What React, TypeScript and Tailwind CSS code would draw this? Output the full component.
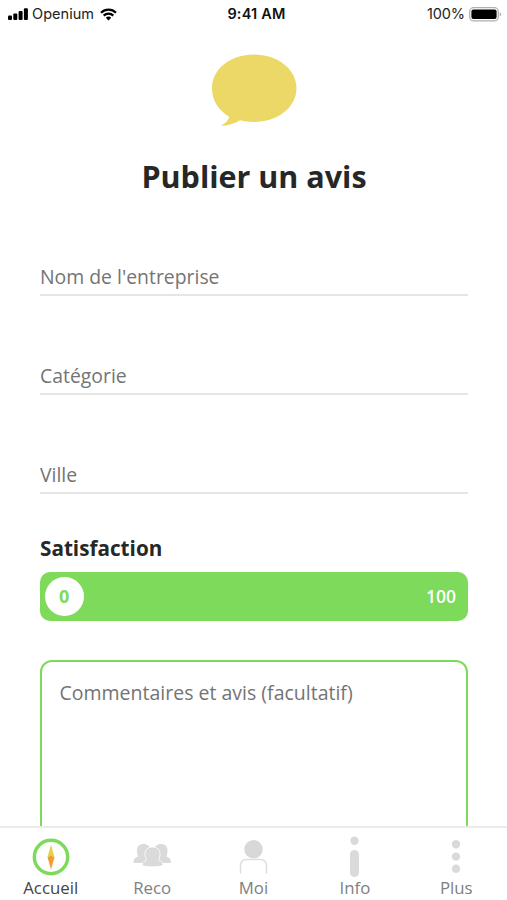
import type { ReactNode } from "react";
import { clsx } from "clsx";

/* ─── Status bar ────────────────────────────────────────────────────── */

function SignalIcon() {
  return (
    <svg width="20" height="12" viewBox="0 0 20 12" fill="#000">
      <rect x="0" y="7.5" width="4" height="4.5" rx="1" />
      <rect x="5.3" y="5.5" width="4" height="6.5" rx="1" />
      <rect x="10.6" y="3" width="4" height="9" rx="1" />
      <rect x="15.9" y="0.3" width="4" height="11.7" rx="1" />
    </svg>
  );
}

function WifiIcon() {
  return (
    <svg width="17" height="13" viewBox="0 0 17 13" fill="none" stroke="#000" strokeWidth="2.2">
      <path d="M1 4.8a10.6 10.6 0 0 1 15 0" />
      <path d="M3.7 7.6a6.8 6.8 0 0 1 9.6 0" />
      <path d="M8.5 12.6 5.8 9.8a3.8 3.8 0 0 1 5.4 0Z" fill="#000" stroke="none" />
    </svg>
  );
}

function BatteryIcon() {
  return (
    <svg width="33" height="15" viewBox="0 0 33 15">
      <rect x="0.7" y="0.7" width="28.6" height="13.2" rx="4" fill="#fff" stroke="#b0b0b0" strokeWidth="1.3" />
      <rect x="2.4" y="2.5" width="25.2" height="9.6" rx="2" fill="#000" />
      <path d="M30.8 5.2c1.8.6 1.8 3.6 0 4.3Z" fill="#aaa" />
    </svg>
  );
}

function StatusBar() {
  return (
    <header className="grid h-7 shrink-0 grid-cols-3 items-center pl-2 pr-[5px] font-['Inter','Liberation_Sans',sans-serif] text-[14.5px] text-[#222]">
      <div className="flex items-center">
        <SignalIcon />
        <span className="ml-1 mr-1 w-[64px] whitespace-nowrap tracking-[0.05px]">Openium</span>
        <WifiIcon />
      </div>
      <span className="ml-[3px] whitespace-nowrap text-center font-semibold tracking-[0.2px] text-[#111]">9:41 AM</span>
      <div className="flex items-center justify-end gap-1">
        <span className="tracking-[-0.1px]">100%</span>
        <BatteryIcon />
      </div>
    </header>
  );
}

/* ─── Form ──────────────────────────────────────────────────────────── */

function SpeechBubble() {
  return (
    <svg className="mx-auto shrink-0" width="86" height="72" viewBox="0 0 86 72" fill="#ecd866">
      <path d="M43 0.5C66.5 0.5 85.5 15 85.5 34.3S66.5 68 43 68c-5 0-9.700-.7-14-1.700C22.500 70 15.500 72.500 10 71.400c4-1.900 6.800-4.400 8.300-8.700C7.500 56.500 1 46.500 1 34.300 1 15 19.500 0.500 43 0.500Z" />
    </svg>
  );
}

function Field({ label }: { label: string }) {
  return (
    <div className="flex h-8 items-start border-b-2 border-[#e5e5e5] text-[19.4px] leading-[26px] text-[#747474]">
      {label}
    </div>
  );
}

function SatisfactionSlider({ value, max }: { value: number; max: number }) {
  return (
    <div className="mt-[10px] flex h-[49px] shrink-0 items-center justify-between rounded-[10px] bg-[#7eda5a] pl-[4.500px] pr-3 text-[17.500px] font-semibold">
      <span className="flex size-[39.500px] items-center justify-center rounded-full bg-white text-[18px] font-bold text-[#7eda5a]">
        {value}
      </span>
      <span className="text-white">{max}</span>
    </div>
  );
}

/* ─── Tab bar icons ─────────────────────────────────────────────────── */

function CompassIcon() {
  return (
    <svg width="38" height="38" viewBox="0 0 38 38">
      <circle cx="19" cy="19" r="16.7" fill="#fff" stroke="#7eda5a" strokeWidth="3.4" />
      <path d="M19 6.5 22.5 19h-7Z" fill="#e9cf50" />
      <path d="M19 31.5 22.5 19h-7Z" fill="#f7992f" />
      <circle cx="19" cy="19" r="1.5" fill="#d3a344" />
    </svg>
  );
}

function GroupIcon() {
  return (
    <svg width="38" height="38" viewBox="0 0 38 38" fill="#dadada">
      <path d="M10.500 6C14.500 6 17 8.500 17 12V25H.5C.6 21.500 1.500 20 4.500 18.800 5 18.500 5 18 4.700 17.300 4 15.500 4 14 4 12 4 8.500 6.500 6 10.500 6Z" />
      <path d="M28 6C24 6 21.500 8.500 21.500 12V25H38C37.900 21.500 37 20 34 18.800 33.500 18.500 33.500 18 33.800 17.300 34.500 15.500 34.500 14 34.500 12 34.500 8.500 32 6 28 6Z" />
      <path
        d="M19.500 9C24.300 9 27 11.800 27 16 27 18.500 26.500 20 25.700 21.500 25.500 22.300 26 22.700 27 23 29 23.700 29.800 25 30 27.500 25 29.200 14 29.200 9 27.500 9.200 25 10 23.700 12 23 13 22.700 13.500 22.300 13.300 21.500 12.500 20 12 18.500 12 16 12 11.800 14.700 9 19.500 9Z"
        stroke="#fff"
        strokeWidth="0.8"
      />
    </svg>
  );
}

function PersonIcon() {
  return (
    <svg width="38" height="38" viewBox="0 0 38 38">
      <circle cx="19.5" cy="11.2" r="9.2" fill="#d8d8d8" />
      <path d="M6.5 35.500v-7.500c0-4 2.500-6.500 6.500-6.500h13c4 0 6.500 2.500 6.500 6.500v7.500" fill="none" stroke="#dedede" strokeWidth="1.5" />
    </svg>
  );
}

function InfoIcon() {
  return (
    <svg width="38" height="42" viewBox="0 0 38 42" fill="#dadada">
      <circle cx="18.5" cy="4.7" r="4.2" />
      <rect x="14" y="14" width="9" height="27" rx="4.5" />
    </svg>
  );
}

function DotsIcon() {
  return (
    <svg width="38" height="38" viewBox="0 0 38 38" fill="#dadada">
      <circle cx="19" cy="6.3" r="4.2" />
      <circle cx="19" cy="18.6" r="4.2" />
      <circle cx="19" cy="30.8" r="4.2" />
    </svg>
  );
}

const tabs: { label: string; icon: ReactNode }[] = [
  { label: "Accueil", icon: <CompassIcon /> },
  { label: "Reco", icon: <GroupIcon /> },
  { label: "Moi", icon: <PersonIcon /> },
  { label: "Info", icon: <InfoIcon /> },
  { label: "Plus", icon: <DotsIcon /> },
];

function TabBar() {
  return (
    <nav className="grid h-[74px] shrink-0 grid-cols-5 border-t-2 border-[#ebebeb] bg-white">
      {tabs.map((tab, i) => (
        <div key={tab.label} className="flex flex-col items-center pt-[9px]">
          <div className="flex h-[39px] items-center justify-center">{tab.icon}</div>
          <span className={clsx("text-[16.8px] leading-[23px]", i === 0 ? "text-[#444]" : "text-[#808080]")}>
            {tab.label}
          </span>
        </div>
      ))}
    </nav>
  );
}

export default function App() {
  return (
    <div className="flex h-[900px] w-full flex-col overflow-hidden bg-white font-['Open_Sans','Noto_Sans',sans-serif]">
      <StatusBar />
      <main className="flex min-h-0 flex-1 flex-col overflow-hidden pl-10 pr-[39px] pt-[26px]">
        <SpeechBubble />
        <h1 className="mt-[30px] text-center text-[30.5px] font-bold leading-10 text-[#262827]">Publier un avis</h1>
        <div className="mt-[68px] flex flex-col gap-[67px]">
          <Field label="Nom de l'entreprise" />
          <Field label="Catégorie" />
          <Field label="Ville" />
        </div>
        <h2 className="mt-10 text-[20.7px] font-bold leading-7 text-[#262827]">Satisfaction</h2>
        <SatisfactionSlider value={0} max={100} />
        <div className="mt-[39px] h-[220px] shrink-0 rounded-xl border-2 border-[#7eda5a] px-[17.500px] pt-[18px] text-[19.5px] leading-[26px] text-[#747474]">
          Commentaires et avis (facultatif)
        </div>
      </main>
      <TabBar />
    </div>
  );
}
